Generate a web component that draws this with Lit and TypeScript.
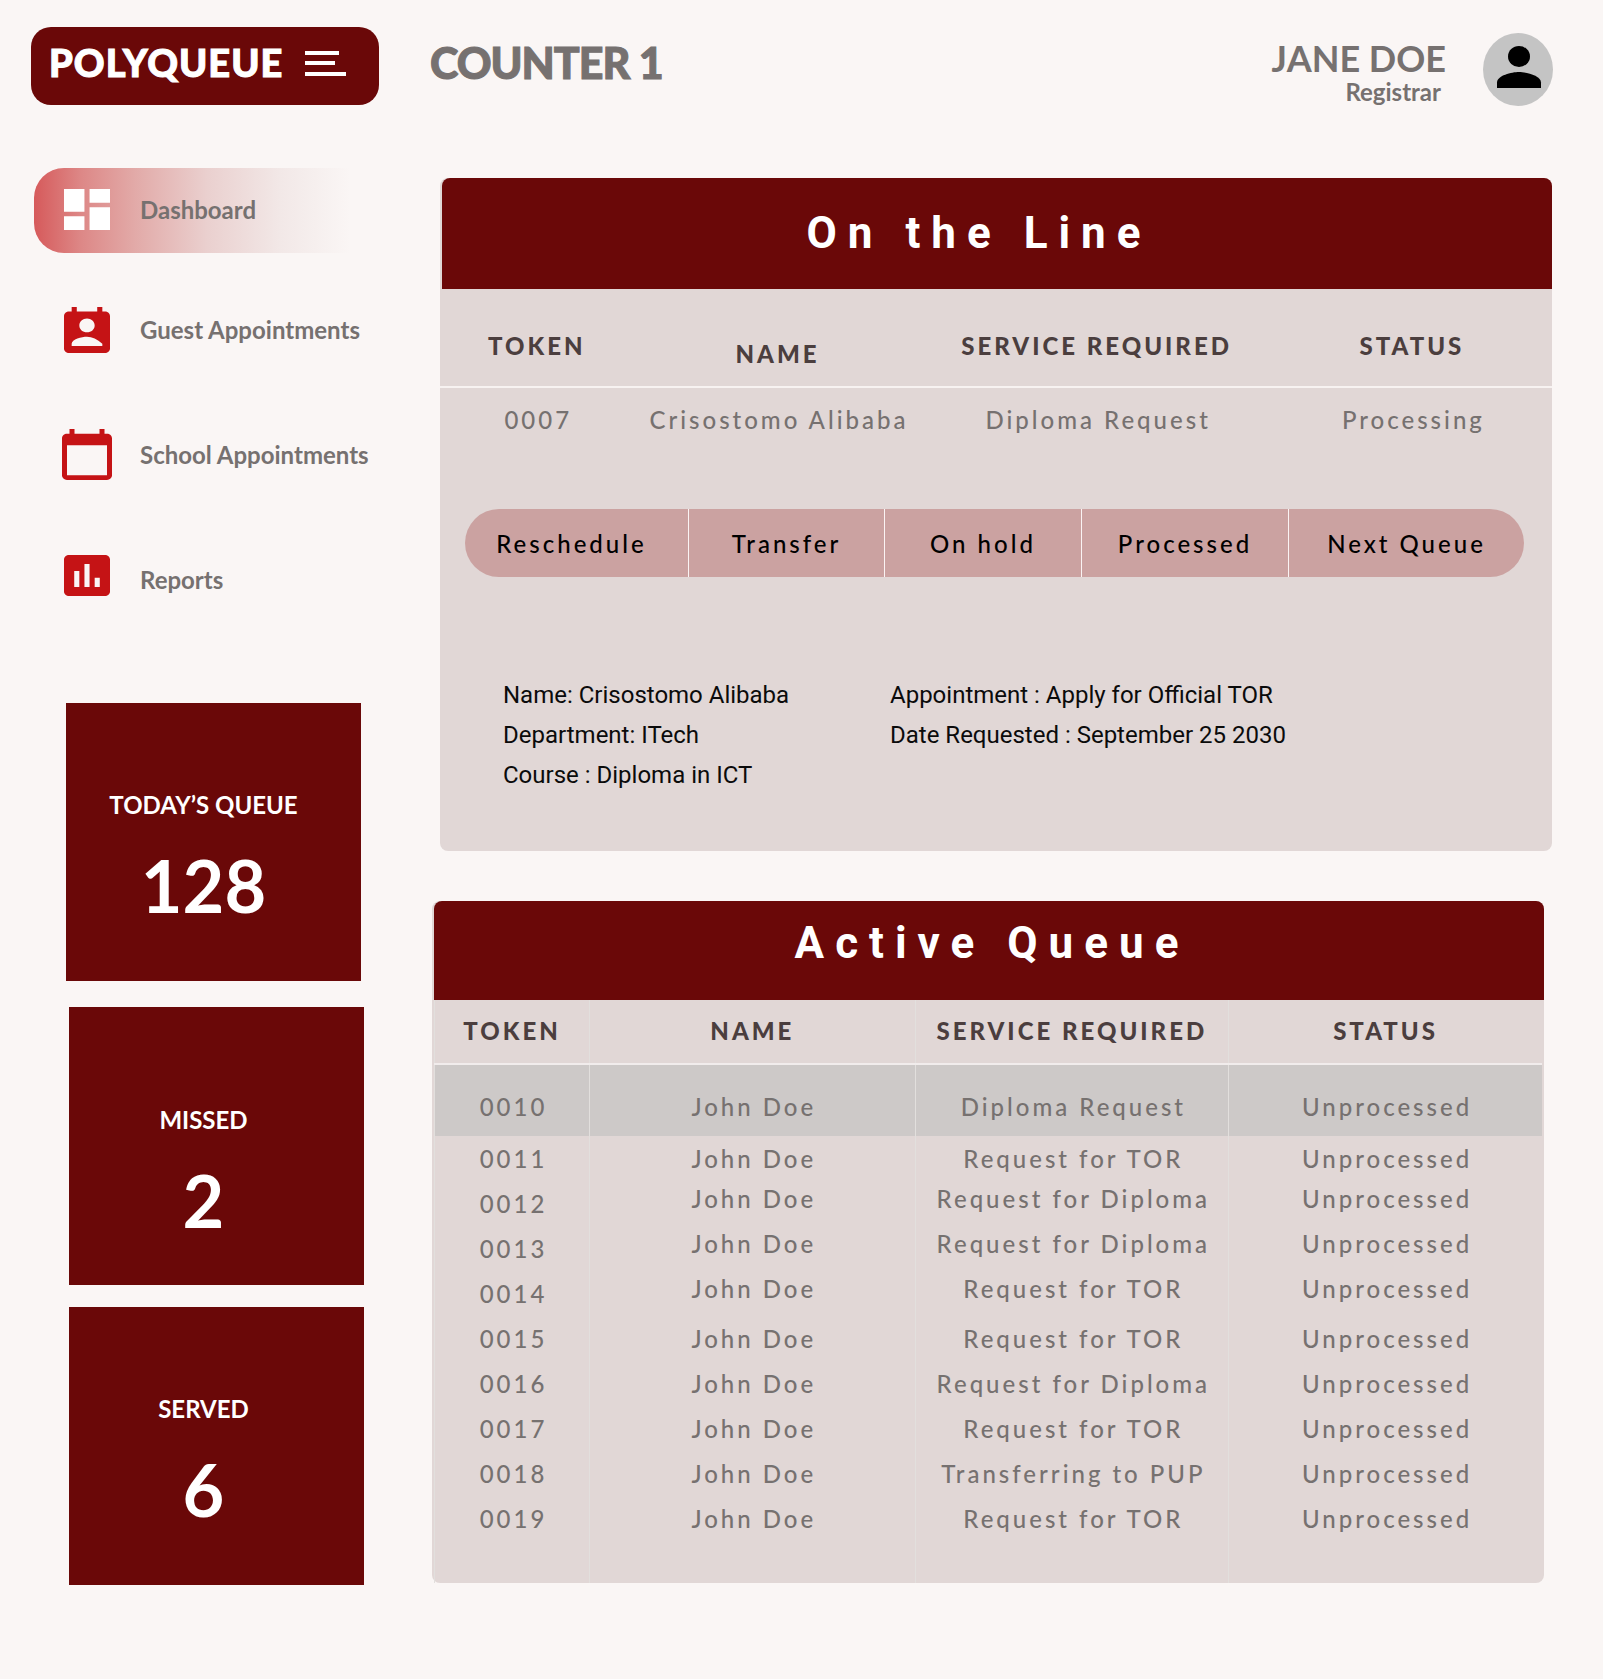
import { LitElement, html, css, svg } from "lit";
import { customElement, state } from "lit/decorators.js";
import { classMap } from "lit/directives/class-map.js";

const dashboardIcon = svg`<svg class="icon" width="46" height="41" viewBox="3 3 18 18" preserveAspectRatio="none" aria-hidden="true"><path d="M3 13h8V3H3v10zm0 8h8v-6H3v6zm10 0h8V11h-8v10zm0-18v6h8V3h-8z"/></svg>`;
const guestIcon = svg`<svg class="icon" width="46" height="46" viewBox="3 1 18 20" preserveAspectRatio="none" aria-hidden="true"><path d="M19 3h-1V1h-2v2H8V1H6v2H5c-1.11 0-2 .9-2 2v14c0 1.1.89 2 2 2h14c1.1 0 2-.9 2-2V5c0-1.1-.9-2-2-2zm-7 3c1.66 0 3 1.34 3 3s-1.34 3-3 3-3-1.34-3-3 1.34-3 3-3zm6 12H6v-1c0-2 4-3.1 6-3.1s4 1.1 6 3.1v1z"/></svg>`;
const schoolIcon = svg`<svg class="icon" width="50" height="51" viewBox="2 1 20 22" preserveAspectRatio="none" aria-hidden="true"><path d="M20 3h-1V1h-2v2H7V1H5v2H4c-1.1 0-2 .9-2 2v16c0 1.1.9 2 2 2h16c1.1 0 2-.9 2-2V5c0-1.1-.9-2-2-2zm0 18H4V8h16v13z"/></svg>`;
const reportsIcon = svg`<svg class="icon" width="46" height="49" viewBox="3 3 18 21.5" preserveAspectRatio="none" aria-hidden="true"><path d="M19 3H5c-1.1 0-2 .9-2 2v14c0 1.1.9 2 2 2h14c1.1 0 2-.9 2-2V5c0-1.1-.9-2-2-2zM9 17H7v-7h2v7zm4 0h-2V7h2v10zm4 0h-2v-4h2v4z"/></svg>`;

const NAV = [
  { label: "Dashboard", icon: dashboardIcon },
  { label: "Guest Appointments", icon: guestIcon },
  { label: "School Appointments", icon: schoolIcon },
  { label: "Reports", icon: reportsIcon },
];

const STATS = [
  { label: "TODAY’S QUEUE", value: 128 },
  { label: "MISSED", value: 2 },
  { label: "SERVED", value: 6 },
];

const COLUMNS = ["TOKEN", "NAME", "SERVICE REQUIRED", "STATUS"];

const QUEUE = [
  { token: "0010", service: "Diploma Request" },
  { token: "0011", service: "Request for TOR" },
  { token: "0012", service: "Request for Diploma", raised: true },
  { token: "0013", service: "Request for Diploma", raised: true },
  { token: "0014", service: "Request for TOR", raised: true },
  { token: "0015", service: "Request for TOR" },
  { token: "0016", service: "Request for Diploma" },
  { token: "0017", service: "Request for TOR" },
  { token: "0018", service: "Transferring to PUP" },
  { token: "0019", service: "Request for TOR" },
];

const ACTIONS = ["Reschedule", "Transfer", "On hold", "Processed", "Next Queue"];

@customElement("app-root")
export class AppRoot extends LitElement {
  @state() private page = "Dashboard";
  @state() private selected = "0010";

  static styles = css`
    :host {
      --maroon: #6a0808;
      --panel: #e1d7d6;
      --grey: #767170;
      display: block;
      box-sizing: border-box;
      min-height: 100vh;
      padding: 27px 50px 94px 31px;
      background: #faf6f5;
      color: var(--grey);
      font: 24px/29px Lato, sans-serif;
    }
    * { box-sizing: border-box; }
    h1, h2, p, ul { margin: 0; padding: 0; }
    button { font: inherit; color: inherit; border: 0; background: none; padding: 0; cursor: pointer; }

    .top { display: grid; grid-template-columns: 399px 1fr auto; align-items: start; }
    .brand {
      display: flex; align-items: center; gap: 22px;
      width: 348px; height: 78px; padding: 0 0 8px 18px;
      border-radius: 20px; background: var(--maroon); color: #fff;
      font-size: 38px; line-height: 46px; font-weight: 900; letter-spacing: 1px;
      -webkit-text-stroke: 1px currentColor;
    }
    .menu { display: flex; padding-top: 2px; }
    .counter {
      padding-top: 10px; font-size: 43px; line-height: 52px; font-weight: 900; letter-spacing: -1px;
      -webkit-text-stroke: 1px currentColor;
    }
    .user { display: flex; gap: 37px; padding-top: 6px; }
    .who { padding-top: 7px; text-align: right; }
    .name { font-size: 36px; line-height: 37px; font-weight: 700; }
    .role { padding-right: 5px; font-weight: 700; }

    .body { display: grid; grid-template-columns: 401px 1fr; padding-top: 62px; }

    .nav { display: flex; flex-direction: column; gap: 30px; padding: 0 0 0 3px; list-style: none; }
    .link {
      display: flex; align-items: center; gap: 28px;
      width: 334px; height: 95px; padding: 0 0 2px 28px;
      color: inherit; font-weight: 700; text-decoration: none; white-space: nowrap;
    }
    .link.active {
      height: 85px; width: 316px; border-radius: 30px 0 0 30px;
      background: linear-gradient(90deg, #d65a5b 0%, #dd8887 15%, #e2aaa8 32%, #ead0cf 55%, #f2e8e7 78%, #faf6f5 100%);
    }
    .slot { display: flex; justify-content: center; width: 50px; color: #c51315; }
    .active .slot { color: #fff; }
    .icon { display: block; fill: currentColor; }

    .stats { display: flex; flex-direction: column; gap: 22px; padding: 75px 0 0 35px; }
    .stat {
      width: 295px; height: 278px; padding: 87px 20px 0 0;
      background: var(--maroon); color: #fff; text-align: center;
    }
    .stat + .stat { margin-left: 3px; padding-right: 26px; }
    .stat.low { margin-top: 4px; padding-top: 98px; }
    .stat-label { font-weight: 700; }
    .stat-value { padding-top: 23px; font-size: 72px; line-height: 86px; font-weight: 700; }

    .main { display: flex; flex-direction: column; gap: 50px; padding: 10px 1px 0 0; }
    .card { border-radius: 8px; background: var(--panel); }
    .current { margin-left: 8px; padding-bottom: 56px; }
    .active-queue { margin-right: 8px; }
    .title {
      margin-left: 2px; border-radius: 8px 8px 0 0;
      background: var(--maroon); color: #fff; text-align: center;
      font: 700 44px/52px Roboto, sans-serif; letter-spacing: 11px;
    }
    .current .title { padding: 29px 36px 30px 0; }
    .active-queue .title { padding: 16px 0 31px 6px; }

    table { border-collapse: collapse; table-layout: fixed; width: 100%; letter-spacing: 3px; text-align: center; }
    th { padding: 0; color: #4b3e3e; font-weight: 900; }
    td { padding: 0 0 0 3px; font-weight: 500; }

    .one th { height: 98px; padding: 34px 0 18px; border-bottom: 2px solid #f7f2f1; vertical-align: middle; }
    .one th.name-col { vertical-align: bottom; }
    .one td { padding-top: 17px; }
    .one .c0 { width: 17.4%; }
    .one .c1 { width: 25.9%; }
    .one .c2 { width: 31.5%; }

    .grid-wrap { padding: 0 2px; }
    .many th, .many td { border-left: 1px solid #e2dfdd; }
    .many td { height: 45px; }
    .many .c0 { width: 14%; }
    .many .c1 { width: 29.4%; }
    .many .c2 { width: 28.3%; }
    .many .selected td { height: 72px; padding-top: 12px; background: #cdc9c8; }
    .many .raised td:not(.token) { padding-top: 3px; vertical-align: top; }
    .many tbody tr:last-child td { height: 87px; padding-bottom: 42px; }
    .many th { height: 64px; padding-bottom: 2px; border-bottom: 2px solid #f1ecec; }

    .actions {
      display: grid; grid-template-columns: 223fr 196fr 197fr 207fr 236fr;
      margin: 75px 28px 0 25px; overflow: hidden; border-radius: 34px; background: #cba2a1;
    }
    .action { height: 68px; color: #000; font-weight: 500; letter-spacing: 3px; }
    .action + .action { border-left: 1px solid #fbf4f4; }
    .action:first-child { padding-right: 10px; }

    .details {
      display: grid; grid-template-columns: 387px 1fr; padding: 98px 0 0 63px;
      color: #0b0b0b; font: 24px/40px Roboto, sans-serif;
    }
  `;

  private head() {
    return html`<thead><tr>${COLUMNS.map(
      (c, i) => html`<th scope="col" class="c${i} ${c === "NAME" ? "name-col" : ""}">${c}</th>`
    )}</tr></thead>`;
  }

  render() {
    return html`
      <header class="top">
        <div class="brand">
          <span>POLYQUEUE</span>
          <button class="menu" aria-label="Menu">
            <svg width="41" height="25" viewBox="0 0 41 25" fill="#fff" aria-hidden="true">
              <path d="M0 0h34v4H0zM0 10h30v4H0zM0 21h41v4H0z"/>
            </svg>
          </button>
        </div>
        <h1 class="counter">COUNTER 1</h1>
        <div class="user">
          <div class="who">
            <p class="name">JANE DOE</p>
            <p class="role">Registrar</p>
          </div>
          <svg width="70" height="73" viewBox="0 0 70 73" aria-hidden="true">
            <ellipse cx="35" cy="36.5" rx="35" ry="36.5" fill="#c4c4c4"/>
            <ellipse cx="36" cy="23.5" rx="11" ry="10.5"/>
            <path d="M14 55V49.500C14 42.500 28.700 39 36 39S58 42.500 58 49.500V55z"/>
          </svg>
        </div>
      </header>

      <div class="body">
        <aside>
          <nav aria-label="Main">
            <ul class="nav">
              ${NAV.map(
                (n) => html`<li>
                  <a href="#" class=${classMap({ link: true, active: n.label === this.page })}
                    @click=${(e: Event) => { e.preventDefault(); this.page = n.label; }}>
                    <span class="slot">${n.icon}</span><span>${n.label}</span>
                  </a>
                </li>`
              )}
            </ul>
          </nav>
          <div class="stats">
            ${STATS.map(
              (s) => html`<section class=${classMap({ stat: true, low: s.label === "MISSED" })}>
                <p class="stat-label">${s.label}</p>
                <p class="stat-value">${s.value}</p>
              </section>`
            )}
          </div>
        </aside>

        <main class="main">
          <section class="card current">
            <h2 class="title">On the Line</h2>
            <table class="one">
              ${this.head()}
              <tbody>
                <tr><td>0007</td><td>Crisostomo Alibaba</td><td>Diploma Request</td><td>Processing</td></tr>
              </tbody>
            </table>
            <div class="actions">
              ${ACTIONS.map((a) => html`<button class="action">${a}</button>`)}
            </div>
            <div class="details">
              <div>
                <p>Name: Crisostomo Alibaba</p>
                <p>Department: ITech</p>
                <p>Course : Diploma in ICT</p>
              </div>
              <div>
                <p>Appointment : Apply for Official TOR</p>
                <p>Date Requested : September 25 2030</p>
              </div>
            </div>
          </section>

          <section class="card active-queue">
            <h2 class="title">Active Queue</h2>
            <div class="grid-wrap">
              <table class="many">
                ${this.head()}
                <tbody>
                  ${QUEUE.map(
                    (q) => html`<tr class=${classMap({ selected: q.token === this.selected, raised: !!q.raised })}
                      @click=${() => (this.selected = q.token)}>
                      <td class="token">${q.token}</td><td>John Doe</td><td>${q.service}</td><td>Unprocessed</td>
                    </tr>`
                  )}
                </tbody>
              </table>
            </div>
          </section>
        </main>
      </div>
    `;
  }
}
